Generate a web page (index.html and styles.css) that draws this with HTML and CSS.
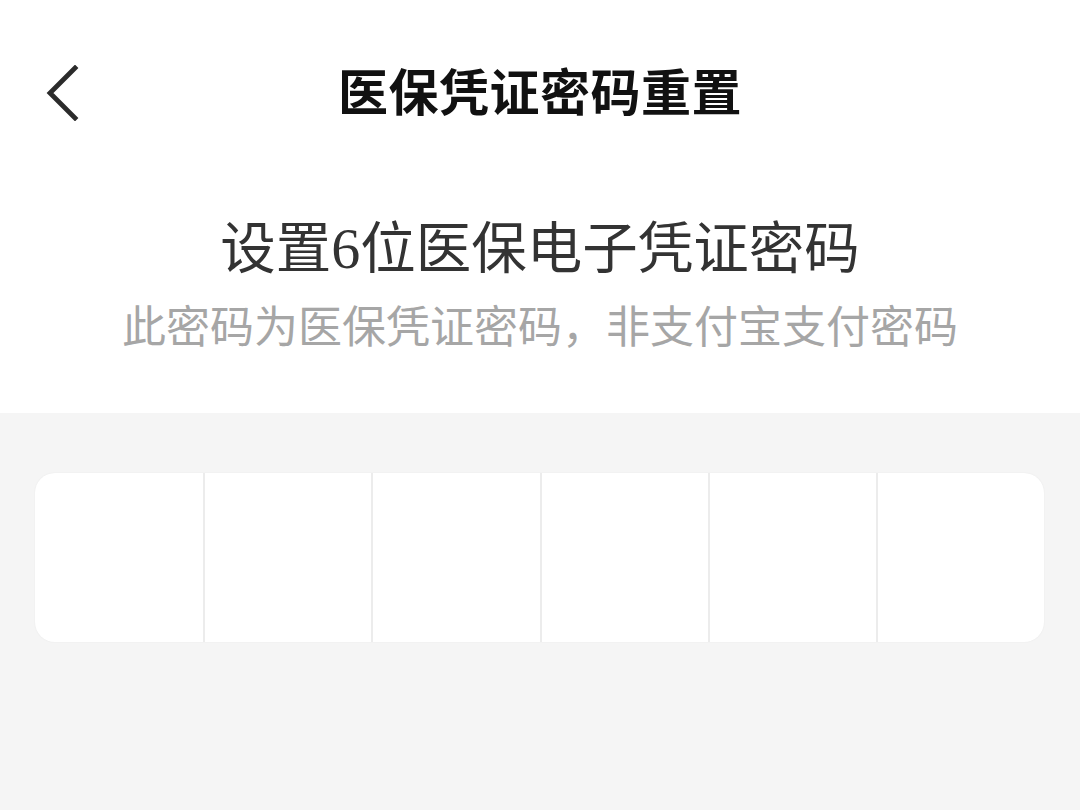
FILE: index.html
```html
<!DOCTYPE html>
<html lang="zh-CN">
<head>
<meta charset="utf-8">
<title>医保凭证密码重置</title>
<link rel="stylesheet" href="styles.css">
</head>
<body>
<div class="page">
  <header class="nav">
    <div class="back">
      <svg width="34" height="56" viewBox="0 0 34 56" aria-hidden="true">
        <path d="M30 3 L5 28 L30 53" fill="none" stroke="#2b2b2b" stroke-width="4.8" stroke-linecap="square" stroke-linejoin="miter"/>
      </svg>
    </div>
    <h1 class="title">医保凭证密码重置</h1>
  </header>
  <section class="intro">
    <h2 class="heading">设置<span class="digit">6</span>位医保电子凭证密码</h2>
    <p class="sub">此密码为医保凭证密码，非支付宝支付密码</p>
  </section>
  <section class="panel">
    <div class="pinbox">
      <div class="cell"></div>
      <div class="cell"></div>
      <div class="cell"></div>
      <div class="cell"></div>
      <div class="cell"></div>
      <div class="cell"></div>
    </div>
  </section>
</div>
</body>
</html>
```
FILE: styles.css
```css
html, body {
  margin: 0;
  padding: 0;
  background: #f5f5f5;
}
.page {
  width: 1080px;
  height: 810px;
  background: #f5f5f5;
  font-family: "Noto Sans CJK SC", "Noto Sans", sans-serif;
  overflow: hidden;
}
.nav {
  height: 186px;
  box-sizing: border-box;
  padding-bottom: 9px;
  background: #fff;
  display: flex;
  align-items: center;
  justify-content: center;
  position: relative;
}
.back {
  position: absolute;
  left: 45px;
  top: 65px;
  width: 34px;
  height: 56px;
}
.back svg { display: block; }
.title {
  margin: 0;
  font-size: 50px;
  line-height: 1;
  font-weight: 700;
  color: #111;
  letter-spacing: 0.5px;
}
.intro {
  background: #fff;
  padding: 0 0 61px;
  text-align: center;
}
.heading {
  margin: 0;
  font-size: 55.5px;
  line-height: 64px;
  font-weight: 400;
  color: #333;
  padding-top: 26px;
}
.digit {
  font-family: "Liberation Serif", serif;
  font-size: 58px;
}
.sub {
  margin: 15px 0 0;
  font-size: 44px;
  line-height: 56px;
  color: #a6a6a6;
  font-weight: 400;
}
.panel {
  padding: 60px 36px 0 35px;
}
.pinbox {
  height: 169px;
  background: #fff;
  border-radius: 20px;
  display: grid;
  grid-template-columns: repeat(6, 1fr);
  box-shadow: 0 0 2px rgba(0,0,0,0.06);
  overflow: hidden;
}
.cell + .cell {
  border-left: 2px solid #ececec;
}
```
